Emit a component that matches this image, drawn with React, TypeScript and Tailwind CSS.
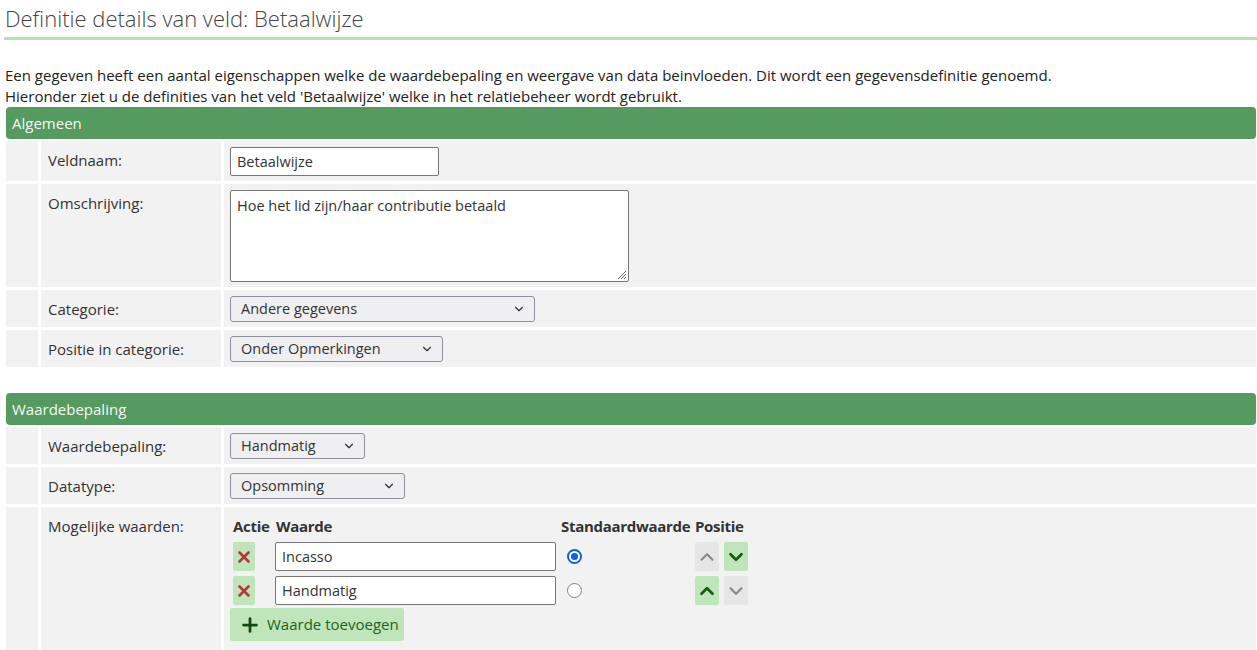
import { ChevronDown, ChevronUp, Plus, X } from "lucide-react";
import { ReactNode } from "react";

const font = "font-['Open_Sans',_'Liberation_Sans',_sans-serif]";

function Row({ label, children }: { label: string; children: ReactNode }) {
  return (
    <div className="grid grid-cols-[32px_180px_1fr] gap-[3px]">
      <div className="bg-[#f2f2f2]" />
      <div className="bg-[#f2f2f2] px-[7px] pb-[6px] pt-[7px] leading-[24px]">{label}</div>
      <div className="bg-[#f2f2f2] px-[6px] pb-[5px] pt-[6px]">{children}</div>
    </div>
  );
}

function Select({ value, width }: { value: string; width: string }) {
  return (
    <div
      className={`flex h-[26px] items-center justify-between rounded-[3px] border border-[#8f8f9d] bg-[#efeff1] pl-[10px] pr-[8px] text-[14.5px] leading-none ${width}`}
    >
      <span>{value}</span>
      <ChevronDown size={14} strokeWidth={2} className="text-[#333]" />
    </div>
  );
}

function Section({ title, children }: { title: string; children: ReactNode }) {
  return (
    <section className="ml-[6px] flex w-[1250px] flex-col gap-[3px]">
      <div className="mb-[-1px] h-[32px] rounded-[4px] bg-[#559a5f] px-[6px] text-[15px] leading-[32px] text-[#f3f9f3]">
        {title}
      </div>
      {children}
    </section>
  );
}

function MoveButton({ dir, active }: { dir: "up" | "down"; active: boolean }) {
  const Icon = dir === "up" ? ChevronUp : ChevronDown;
  return (
    <div
      className={`flex h-[29px] w-[24px] items-center justify-center rounded-[2px] ${
        active ? "bg-[#bfe6ba] text-[#155d15]" : "bg-[#e6e6e6] text-[#8a8a8a]"
      }`}
    >
      <Icon size={22} strokeWidth={active ? 3 : 2.4} />
    </div>
  );
}

const values = [
  { name: "Incasso", checked: true, up: false, down: true },
  { name: "Handmatig", checked: false, up: true, down: false }
];

export default function App() {
  return (
    <div className={`${font} min-h-[650px] bg-white text-[15px] text-[#333]`}>
      <h1 className="ml-[4px] border-b-[3px] border-[#b4e2ad] pb-[4px] pl-[1px] pt-[3px] text-[22px] font-light leading-[30px] text-[#444]">
        Definitie details van veld: Betaalwijze
      </h1>

      <p className="ml-[5px] mt-[25px] text-[15px] leading-[21px] text-[#222]">
        Een gegeven heeft een aantal eigenschappen welke de waardebepaling en weergave van data beinvloeden. Dit wordt een
        gegevensdefinitie genoemd.
        <br />
        Hieronder ziet u de definities van het veld 'Betaalwijze' welke in het relatiebeheer wordt gebruikt.
      </p>

      <Section title="Algemeen">
        <Row label="Veldnaam:">
          <div className="flex h-[29px] w-[209px] items-center rounded-[2px] border border-[#767676] bg-white px-[6px] text-[14.5px]">
            Betaalwijze
          </div>
        </Row>
        <Row label="Omschrijving:">
          <div className="relative h-[92px] w-[399px] rounded-[2px] border border-[#767676] bg-white px-[6px] py-[5px] text-[14.5px] leading-[20px]">
            Hoe het lid zijn/haar contributie betaald
            <svg className="absolute bottom-[1px] right-[1px]" width="12" height="12" viewBox="0 0 12 12">
              <path d="M11 3 L3 11 M11 6 L6 11 M11 9 L9 11" stroke="#666" strokeWidth="1" />
            </svg>
          </div>
        </Row>
        <Row label="Categorie:">
          <Select value="Andere gegevens" width="w-[305px]" />
        </Row>
        <Row label="Positie in categorie:">
          <Select value="Onder Opmerkingen" width="w-[213px]" />
        </Row>
      </Section>

      <div className="h-[26px]" />

      <Section title="Waardebepaling">
        <Row label="Waardebepaling:">
          <Select value="Handmatig" width="w-[135px]" />
        </Row>
        <Row label="Datatype:">
          <Select value="Opsomming" width="w-[175px]" />
        </Row>
        <Row label="Mogelijke waarden:">
          <div className="ml-[3px] mt-[2px] grid grid-cols-[42px_286px_134px_auto] items-center gap-y-[5px] pb-[3px] font-bold tracking-[-0.3px]">
            <div className="h-[22px] leading-[22px]">Actie</div>
            <div className="h-[22px] pl-[1px] leading-[22px]">Waarde</div>
            <div className="h-[22px] whitespace-nowrap leading-[22px]">Standaardwaarde</div>
            <div className="h-[22px] leading-[22px]">Positie</div>
            {values.map((v) => (
              <div key={v.name} className="contents font-normal tracking-normal">
                <div className="flex h-[29px] w-[22px] items-center justify-center rounded-[2px] bg-[#bfe6ba] text-[#b3393b]">
                  <X size={18} strokeWidth={3.5} />
                </div>
                <div className="flex h-[29px] w-[281px] items-center rounded-[2px] border border-[#767676] bg-white px-[6px] text-[14.5px] font-normal tracking-normal">
                  {v.name}
                </div>
                <div className="flex items-center pl-[6px]">
                  {v.checked ? (
                    <span className="flex h-[15px] w-[15px] items-center justify-center rounded-full border-[2px] border-[#0b63d6] bg-white">
                      <span className="h-[7px] w-[7px] rounded-full bg-[#0b63d6]" />
                    </span>
                  ) : (
                    <span className="h-[15px] w-[15px] rounded-full border-[1.5px] border-[#808080] bg-white" />
                  )}
                </div>
                <div className="flex gap-[5px]">
                  <MoveButton dir="up" active={v.up} />
                  <MoveButton dir="down" active={v.down} />
                </div>
              </div>
            ))}
          </div>
          <button className="flex h-[33px] w-[174px] items-center gap-[6px] rounded-[2px] bg-[#bfe6ba] pl-[9px] text-[15px] text-[#1b641b]">
            <Plus size={22} strokeWidth={3} className="text-[#104a10]" />
            Waarde toevoegen
          </button>
          <div className="h-[6px]" />
        </Row>
      </Section>
    </div>
  );
}
